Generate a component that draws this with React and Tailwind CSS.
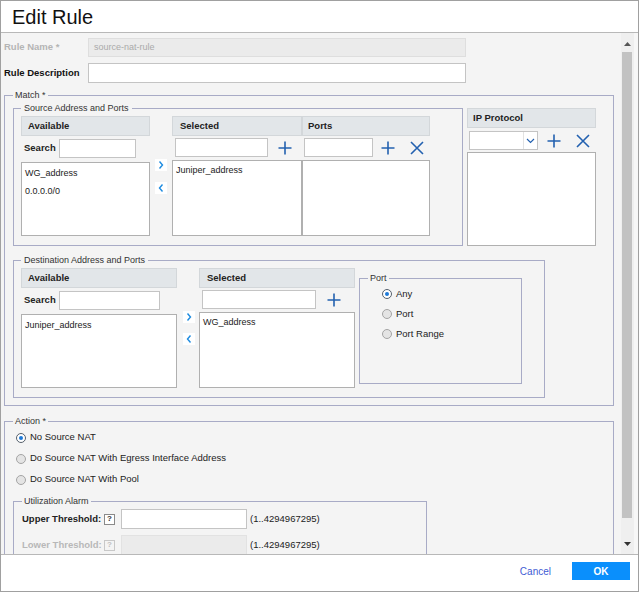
import { useState } from "react";

const PlusIcon = () => (
  <svg width="14" height="14" viewBox="0 0 14 14" className="block">
    <path d="M7 0.5V13.5M0.5 7H13.5" stroke="#2361b0" strokeWidth="1.6" fill="none" />
  </svg>
);

const CloseIcon = () => (
  <svg width="14" height="14" viewBox="0 0 14 14" className="block">
    <path d="M1 1L13 13M13 1L1 13" stroke="#2361b0" strokeWidth="1.6" fill="none" />
  </svg>
);

const Arrow = ({ left }) => (
  <div className="w-[12px] h-[12px] bg-white flex items-center justify-center">
    <svg width="8" height="10" viewBox="0 0 8 10" className="block">
      <path d={left ? "M5.5 1.5L2.5 5L5.5 8.5" : "M2.5 1.5L5.5 5L2.5 8.5"} stroke="#1d8be0" strokeWidth="1.4" fill="none" />
    </svg>
  </div>
);

const Header = ({ children, pl }) => (
  <div className={`h-[20px] bg-[#e2e6e9] border border-[#d3d7da] flex items-center font-bold text-[9.5px] text-[#222] ${pl}`}>
    {children}
  </div>
);

const ListBox = ({ items, h, pt }) => (
  <div className={`bg-white border border-[#b0b0b0] px-[3px] text-[9px] leading-[18px] text-[#222] ${h} ${pt}`}>
    {items.map((it) => (
      <div key={it}>{it}</div>
    ))}
  </div>
);

const Radio = ({ checked }) => (
  <span
    className={`w-[10px] h-[10px] rounded-full border flex items-center justify-center shrink-0 ${
      checked ? "border-[#55606c] bg-white" : "border-[#a4a4a4] bg-[#e4e4e4]"
    }`}
  >
    {checked && <span className="w-[4px] h-[4px] rounded-full bg-[#1e7ad8]" />}
  </span>
);

const Help = ({ muted }) => (
  <span
    className={`w-[11px] h-[11px] border flex items-center justify-center text-[8px] font-bold leading-none shrink-0 ${
      muted ? "border-[#c8c8c8] text-[#c0c0c0] bg-[#f4f4f4]" : "border-[#8a8a8a] text-[#333] bg-white"
    }`}
  >
    ?
  </span>
);

const Input = ({ w, muted }) => (
  <div className={`h-[19px] border ${muted ? "bg-[#ebebeb] border-[#e0e0e0]" : "bg-white border-[#c4c4c4]"} ${w}`} />
);

export default function App() {
  const [action] = useState(0);
  return (
    <div className="w-[639px] h-[592px] border border-[#a0a0a0] bg-white flex flex-col font-['Liberation_Sans',Arial,sans-serif] text-[#222] overflow-hidden">
      {/* title */}
      <div className="h-[32px] border-b border-[#b8b8b8] flex items-center pl-[11px] text-[20px] text-[#111] shrink-0">
        Edit Rule
      </div>

      {/* body */}
      <div className="h-[521px] bg-[#f4f4f4] flex shrink-0 overflow-hidden">
        <div className="w-[620px] pl-[3px] overflow-hidden">
          {/* rule name */}
          <div className="mt-[5px] h-[19px] flex items-center">
            <div className="w-[84px] text-[9.5px] font-bold text-[#b4b4b4]">Rule Name *</div>
            <div className="w-[378px] h-[19px] bg-[#ebebeb] border border-[#dedede] flex items-center pl-[5px] text-[9px] text-[#aaa]">
              source-nat-rule
            </div>
          </div>
          <div className="mt-[6px] h-[20px] flex items-center">
            <div className="w-[84px] text-[9.5px] font-bold text-[#111]">Rule Description</div>
            <div className="w-[378px] h-[20px] bg-white border border-[#c4c4c4]" />
          </div>

          {/* match */}
          <fieldset className="w-[610px] mt-[7px] border border-[#a8abc6] px-[8px] pt-[2px] pb-[7px]">
            <legend className="px-[2px] text-[9px] leading-[11px] text-[#333]">Match *</legend>
            <div className="flex items-start">
              <fieldset className="w-[450px] border border-[#a8abc6] px-[7px] pt-[2px] pb-[9px]">
                <legend className="px-[3px] text-[9px] leading-[11px] text-[#333]">Source Address and Ports</legend>
                <div className="flex items-start">
                  <div className="w-[129px]">
                    <Header pl="pl-[6px]">Available</Header>
                    <div className="mt-[3px] h-[19px] flex items-center">
                      <div className="w-[38px] pl-[3px] font-bold text-[9.5px]">Search</div>
                      <Input w="w-[77px]" />
                    </div>
                    <ListBox items={["WG_address", "0.0.0.0/0"]} h="mt-[4px] h-[74px]" pt="pt-[1px]" />
                  </div>
                  <div className="w-[22px] pl-[5px] pt-[43px]">
                    <Arrow />
                    <div className="mt-[11px]">
                      <Arrow left />
                    </div>
                  </div>
                  <div className="w-[130px]">
                    <Header pl="pl-[7px]">Selected</Header>
                    <div className="mt-[2px] h-[19px] flex items-center">
                      <Input w="ml-[3px] w-[93px]" />
                      <div className="ml-[10px]">
                        <PlusIcon />
                      </div>
                    </div>
                    <ListBox items={["Juniper_address"]} h="mt-[3px] h-[76px]" pt="pt-0" />
                  </div>
                  <div className="w-[128px]">
                    <Header pl="pl-[5px]">Ports</Header>
                    <div className="mt-[2px] h-[19px] flex items-center">
                      <Input w="ml-[2px] w-[69px]" />
                      <div className="ml-[8px]">
                        <PlusIcon />
                      </div>
                      <div className="ml-[15px]">
                        <CloseIcon />
                      </div>
                    </div>
                    <ListBox items={[]} h="mt-[3px] h-[76px]" pt="pt-0" />
                  </div>
                </div>
              </fieldset>

              <div className="w-[129px] ml-[4px] mt-[5px]">
                <Header pl="pl-[5px]">IP Protocol</Header>
                <div className="mt-[3px] h-[19px] flex items-center">
                  <div className="ml-[2px] w-[69px] h-[19px] bg-white border border-[#c4c4c4] flex">
                    <div className="flex-1" />
                    <div className="w-[14px] border-l border-[#e2e2e2] flex items-center justify-center">
                      <svg width="9" height="6" viewBox="0 0 9 6" className="block">
                        <path d="M1 1L4.5 4.5L8 1" stroke="#2361b0" strokeWidth="1.2" fill="none" />
                      </svg>
                    </div>
                  </div>
                  <div className="ml-[9px]">
                    <PlusIcon />
                  </div>
                  <div className="ml-[15px]">
                    <CloseIcon />
                  </div>
                </div>
                <div className="mt-[2px] h-[94px] bg-white border border-[#b0b0b0]" />
              </div>
            </div>

            <fieldset className="w-[532px] mt-[9px] border border-[#a8abc6] px-[7px] pt-[2px] pb-[9px]">
              <legend className="px-[3px] text-[9px] leading-[11px] text-[#333]">Destination Address and Ports</legend>
              <div className="flex items-start">
                <div className="w-[156px]">
                  <Header pl="pl-[6px]">Available</Header>
                  <div className="mt-[3px] h-[19px] flex items-center">
                    <div className="w-[38px] pl-[3px] font-bold text-[9.5px]">Search</div>
                    <Input w="w-[101px]" />
                  </div>
                  <ListBox items={["Juniper_address"]} h="mt-[4px] h-[74px]" pt="pt-[1px]" />
                </div>
                <div className="w-[22px] pl-[6px] pt-[43px]">
                  <Arrow />
                  <div className="mt-[10px]">
                    <Arrow left />
                  </div>
                </div>
                <div className="w-[156px]">
                  <Header pl="pl-[7px]">Selected</Header>
                  <div className="mt-[2px] h-[19px] flex items-center">
                    <Input w="ml-[3px] w-[114px]" />
                    <div className="ml-[11px]">
                      <PlusIcon />
                    </div>
                  </div>
                  <ListBox items={["WG_address"]} h="mt-[3px] h-[76px]" pt="pt-0" />
                </div>
                <fieldset className="w-[163px] ml-[4px] mt-[5px] border border-[#a8abc6] px-[8px] pt-0 pb-[39px]">
                  <legend className="px-[2px] text-[9px] leading-[11px] text-[#333]">Port</legend>
                  {["Any", "Port", "Port Range"].map((p, i) => (
                    <div key={p} className="h-[20px] flex items-center pl-[14px] text-[9.5px]">
                      <Radio checked={i === 0} />
                      <span className="ml-[4px]">{p}</span>
                    </div>
                  ))}
                </fieldset>
              </div>
            </fieldset>
          </fieldset>

          {/* action */}
          <fieldset className="w-[610px] mt-[10px] border border-[#a8abc6] px-[8px] pt-0 pb-[20px]">
            <legend className="px-[2px] text-[9px] leading-[11px] text-[#333]">Action *</legend>
            {["No Source NAT", "Do Source NAT With Egress Interface Address", "Do Source NAT With Pool"].map((a, i) => (
              <div key={a} className="h-[21px] flex items-center pl-[3px] text-[9.5px]">
                <Radio checked={i === action} />
                <span className="ml-[4px]">{a}</span>
              </div>
            ))}
            <fieldset className="w-[414px] mt-[6px] border border-[#a8abc6] px-[8px] pt-[2px] pb-[10px]">
              <legend className="px-[2px] text-[9px] leading-[11px] text-[#333]">Utilization Alarm</legend>
              <div className="h-[20px] flex items-center">
                <span className="w-[82px] font-bold text-[9.5px]">Upper Threshold:</span>
                <Help />
                <div className="ml-[6px] w-[126px] h-[20px] bg-white border border-[#c4c4c4]" />
                <span className="ml-[3px] text-[9.5px]">(1..4294967295)</span>
              </div>
              <div className="mt-[6px] h-[20px] flex items-center">
                <span className="w-[82px] font-bold text-[9.5px] text-[#b8b8b8]">Lower Threshold:</span>
                <Help muted />
                <div className="ml-[6px] w-[126px] h-[20px] bg-[#ebebeb] border border-[#e2e2e2]" />
                <span className="ml-[3px] text-[9.5px]">(1..4294967295)</span>
              </div>
            </fieldset>
          </fieldset>
        </div>

        {/* scrollbar */}
        <div className="w-[17px] flex">
          <div className="w-[13px] bg-[#efefef] flex flex-col items-start">
            <div className="mt-[4px] w-[12px] h-[13px] flex items-center justify-center">
              <svg width="7" height="4" viewBox="0 0 7 4" className="block">
                <path d="M0 4L3.5 0L7 4Z" fill="#555" />
              </svg>
            </div>
            <div className="mt-[2px] ml-[1px] w-[10px] h-[466px] bg-[#c2c2c2]" />
            <div className="flex-1" />
            <div className="mb-[5px] w-[12px] h-[10px] flex items-center justify-center">
              <svg width="7" height="4" viewBox="0 0 7 4" className="block">
                <path d="M0 0L3.5 4L7 0Z" fill="#333" />
              </svg>
            </div>
          </div>
          <div className="flex-1 bg-[#f7f7f7]" />
        </div>
      </div>

      {/* footer */}
      <div className="flex-1 border-t border-[#b8b8b8] bg-white flex items-start justify-end pt-[7px] pr-[8px]">
        <div className="h-[18px] flex items-center text-[10px] text-[#3f5bd4] mr-[21px]">Cancel</div>
        <div className="w-[58px] h-[18px] bg-[#0a8ffc] flex items-center justify-center text-[10px] font-bold text-white">
          OK
        </div>
      </div>
    </div>
  );
}
